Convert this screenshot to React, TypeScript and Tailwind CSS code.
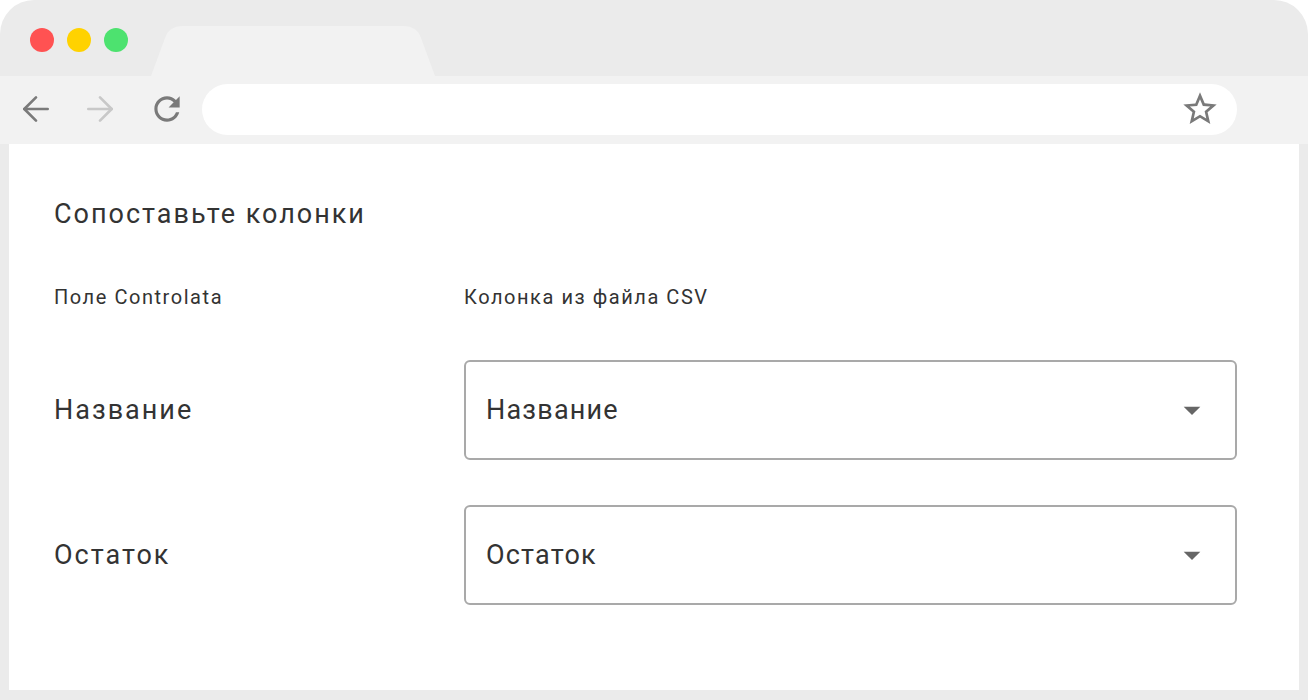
import { ArrowLeft, ArrowRight } from 'lucide-react';

const rows = ['Название', 'Остаток'];

function DropCaret() {
  return (
    <svg width="40" height="40" viewBox="0 0 24 24" className="shrink-0">
      <path d="M7 10l5 5 5-5z" fill="#666666" />
    </svg>
  );
}

export default function App() {
  return (
    <div className="w-[1308px] h-[700px] bg-white" style={{ fontFamily: 'Roboto, "Noto Sans", sans-serif' }}>
      <div className="h-full bg-[#ebebeb] rounded-t-[34px] overflow-hidden flex flex-col">
        {/* Tab bar */}
        <div className="h-[76px] flex items-end shrink-0">
          <div className="flex items-center gap-[13px] pl-[30px] self-start mt-[28px]">
            <span className="w-6 h-6 rounded-full bg-[#ff5252]" />
            <span className="w-6 h-6 rounded-full bg-[#ffd200]" />
            <span className="w-6 h-6 rounded-full bg-[#4de26f]" />
          </div>
          <div className="ml-[23px] w-[284px] h-[50px]">
            <svg width="284" height="50" viewBox="0 0 284 50">
              <path d="M0 50 L14 12 Q18 0 32 0 L252 0 Q266 0 270 12 L284 50 Z" fill="#f2f2f2" />
            </svg>
          </div>
        </div>

        {/* Toolbar */}
        <div className="h-[68px] bg-[#f2f2f2] flex items-center shrink-0 pb-[2px]">
          <div className="w-[70px] flex justify-center pl-[1px]">
            <ArrowLeft size={40} strokeWidth={1.6} color="#7a7a7a" />
          </div>
          <div className="w-[64px] flex justify-center -ml-[2px]">
            <ArrowRight size={40} strokeWidth={1.6} color="#c8c8c8" />
          </div>
          <div className="w-[68px] flex justify-center pl-[2px]">
            <svg width="38" height="38" viewBox="0 0 24 24">
              <path
                d="M17.65 6.35C16.2 4.9 14.21 4 12 4c-4.42 0-7.99 3.58-7.99 8s3.57 8 7.99 8c3.730 0 6.84-2.55 7.73-6h-2.08c-.82 2.33-3.04 4-5.65 4-3.31 0-6-2.69-6-6s2.69-6 6-6c1.66 0 3.14.69 4.22 1.78L13 11h7V4l-2.35 2.35z"
                fill="#7a7a7a"
              />
            </svg>
          </div>
          <div className="ml-[2px] w-[1035px] h-[51px] bg-white rounded-full flex items-center justify-end pr-[17px]">
            <svg width="40" height="40" viewBox="0 0 24 24">
              <path
                d="M22 9.24l-7.19-.62L12 2 9.19 8.63 2 9.24l5.46 4.73L5.82 21 12 17.27 18.18 21l-1.63-7.03L22 9.24zM12 15.4l-3.76 2.27 1-4.28-3.32-2.88 4.38-.38L12 6.1l1.71 4.04 4.38.38-3.32 2.88 1 4.28L12 15.4z"
                fill="#7a7a7a"
              />
            </svg>
          </div>
        </div>

        {/* Page */}
        <div className="mx-[9px] h-[546px] bg-white shrink-0 pl-[45px] pr-[62px] pt-[54px]">
          <h1 className="text-[27px] leading-[32px] text-[#333333] tracking-[2px]">Сопоставьте колонки</h1>

          <div className="mt-[55px] grid grid-cols-[410px_1fr] text-[20px] leading-[24px] text-[#333333] tracking-[1.55px]">
            <span>Поле Controlata</span>
            <span>Колонка из файла CSV</span>
          </div>

          <div className="mt-[51px] flex flex-col gap-[45px]">
            {rows.map((r) => (
              <div key={r} className="grid grid-cols-[410px_1fr] items-center">
                <span className="text-[27px] text-[#333333] tracking-[2px]">{r}</span>
                <div className="h-[100px] border-2 border-[#a9a9a9] rounded-[6px] flex items-center justify-between pl-[20px] pr-[23px]">
                  <span className="text-[27px] text-[#333333] tracking-[1.2px]">{r}</span>
                  <DropCaret />
                </div>
              </div>
            ))}
          </div>
        </div>
      </div>
    </div>
  );
}
